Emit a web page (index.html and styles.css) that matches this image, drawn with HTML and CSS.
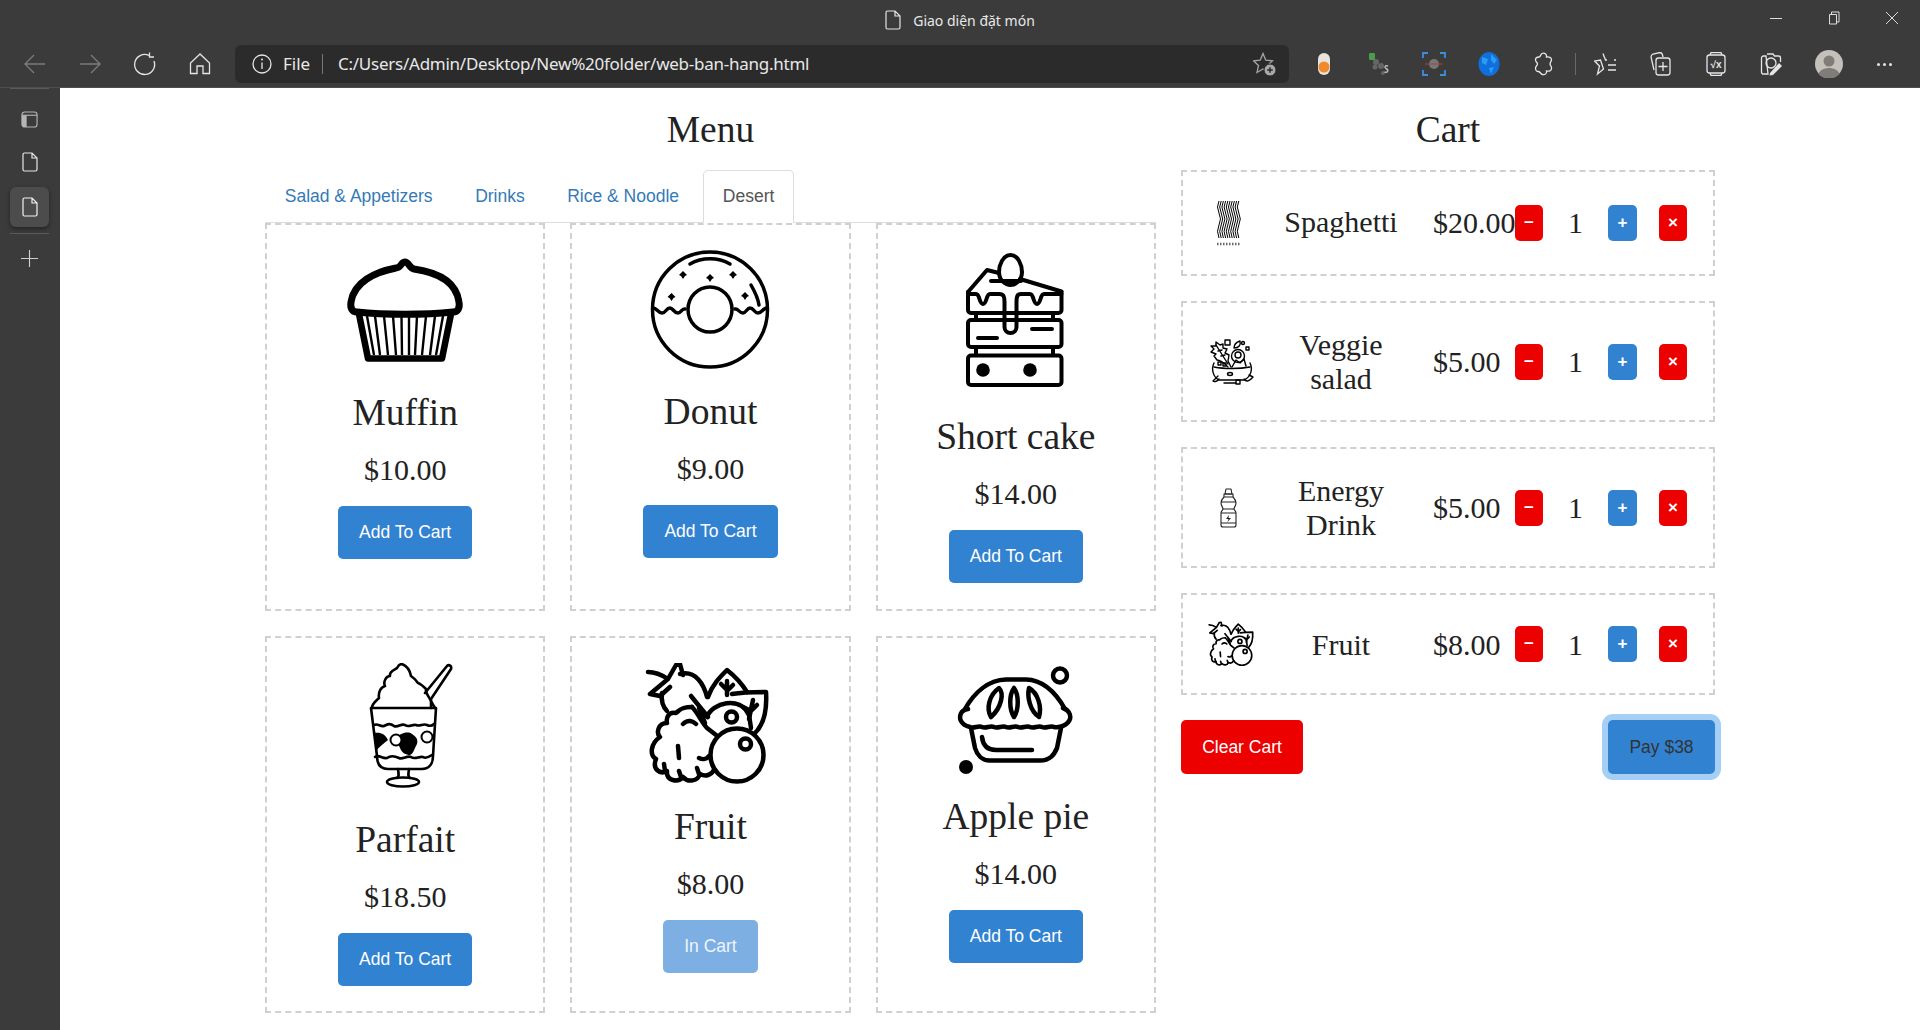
FILE: index.html
```html
<!DOCTYPE html>
<html lang="vi">
<head>
<meta charset="utf-8">
<title>Giao diện đặt món</title>
<link rel="stylesheet" href="styles.css">
</head>
<body>
<svg class="defs" aria-hidden="true">
  <symbol id="fruit" viewBox="-65 0 130 122">
    <g fill="none" stroke="#000" stroke-width="4.5" stroke-linecap="round" stroke-linejoin="round">
      <path d="M-62 9 C-55 9 -48 12 -42 16 L-60 31 L-50 33 L-40 24 M-42 16 L-34 2 L-30 1 L-27 12"/>
      <path d="M-30 11 C-14 7 -6 22 -3 34 M-48 30 C-49 38 -47 44 -43 48"/>
      <path d="M-19 33 L-2 54 M-11 45 L-5 60"/>
      <path d="M-2 34 C2 22 10 14 17 7 C26 14 32 21 37 29"/>
      <path d="M17 18 L17 32 M11 21 L17 27 M23 22 L17 28"/>
      <path d="M22 31 C34 29 46 29 56 29 C57 44 55 60 45 70"/>
      <path d="M43 37 L39 56 M33 44 L41 48 M47 42 L42 47"/>
      <path d="M-3 54 C2 40 30 32 39 52 L41 65"/>
      <circle cx="21.5" cy="54" r="5.5"/>
      <path d="M-18 44 C-30 44 -31 48 -34 50 C-42 48 -44 56 -43 60 C-52 60 -54 70 -50 74 C-59 80 -61 92 -54 96 C-58 106 -50 112 -43 108 C-44 118 -32 120 -27 114 C-22 120 -12 118 -10 111 C-4 114 1 112 4 107"/>
      <path d="M-18 44 C-12 50 -8 60 -3 65 L6 72 M-27 61 C-22 56 -17 58 -14 61 M-32 83 L-31 95 M-46 101 L-45 108 M-31 108 L-29 114 M-11 95 C-7 97 -3 96 -1 93 M-13 105 L-11 111"/>
      <ellipse cx="27" cy="92" rx="26.5" ry="26.5"/>
      <ellipse cx="35.5" cy="81" rx="5.5" ry="5.5"/>
    </g>
  </symbol>
</svg>

<header class="title-bar">
  <div class="title">
    <svg class="tab-doc" viewBox="0 0 16 20"><path d="M1 2.5 A1.5 1.5 0 0 1 2.5 1 H10 L15 6 V17.5 A1.5 1.5 0 0 1 13.5 19 H2.5 A1.5 1.5 0 0 1 1 17.5 Z M10 1 V6 H15" fill="none" stroke="#e6e6e6" stroke-width="1.2"/></svg>
    <span>Giao diện đặt món</span>
  </div>
  <div class="win-controls">
    <svg class="win-ico" viewBox="0 0 14 14"><path d="M1 7.5 H13" stroke="#ddd" fill="none"/></svg>
    <svg class="win-ico" viewBox="0 0 14 14"><path d="M2.5 3.5 H9.5 V13 H2.5 Z M4.5 3.5 V1 H12 V11 H9.5" stroke="#ddd" fill="none"/></svg>
    <svg class="win-ico" viewBox="0 0 14 14"><path d="M1 1 L13 13 M13 1 L1 13" stroke="#ddd" fill="none"/></svg>
  </div>
</header>

<nav class="tool-bar">
  <div class="slot"><svg class="ico" viewBox="0 0 24 24"><path d="M22 12 H2 M11 3 L2 12 L11 21" class="dim"/></svg></div>
  <div class="slot"><svg class="ico" viewBox="0 0 24 24"><path d="M2 12 H22 M13 3 L22 12 L13 21" class="dim"/></svg></div>
  <div class="slot"><svg class="ico" viewBox="0 0 24 24"><path d="M16 3.5 A10 10 0 1 0 21 9 M16.5 0.5 V5 H21" class="lite"/></svg></div>
  <div class="slot"><svg class="ico" viewBox="0 0 24 24"><path d="M12 2 L2.5 11 V21.5 H9 V14 H15 V21.5 H21.5 V11 Z" class="lite"/></svg></div>
  <div class="address">
    <svg class="info" viewBox="0 0 20 20"><circle cx="10" cy="10" r="9" class="lite"/><path d="M10 8.5 V15" class="lite"/><circle cx="10" cy="5.5" r="1" fill="#e6e6e6"/></svg>
    <span class="scheme">File</span>
    <span class="sep"></span>
    <span class="url">C:/Users/Admin/Desktop/New%20folder/web-ban-hang.html</span>
    <svg class="star" viewBox="0 0 24 24"><path d="M10 1.500 L12.800 8.200 L19.500 8.800 L14.500 13.500 L16 20.500 L10 17 L4 20.500 L5.500 13.500 L0.500 8.800 L7.200 8.200 Z" class="mid"/><circle cx="17" cy="18" r="6" fill="#a8a8a8" stroke="#2b2b2b"/><path d="M14.200 18 H19.800 M17 15.200 V20.800" stroke="#2b2b2b" stroke-width="1.500"/></svg>
  </div>
  <div class="slot"><svg class="ico" viewBox="0 0 24 24"><rect x="6" y="1" width="12" height="22" rx="6" fill="#e8e4dc"/><circle cx="12" cy="15" r="5.5" fill="#f08a2c"/></svg></div>
  <div class="slot"><svg class="ico" viewBox="0 0 24 24"><g fill="#666"><circle cx="5" cy="5" r="3"/><circle cx="9" cy="10" r="3"/><circle cx="14" cy="14" r="3"/><circle cx="8" cy="15" r="2.5"/><circle cx="16" cy="21" r="2"/></g><rect x="2" y="1" width="6" height="7" rx="1" fill="#4a9d4a"/><path d="M21 14 C18 13 17 15 19 16.500 C22 18 21 21 17.500 20" stroke="#bbb" stroke-width="1.400" fill="none"/></svg></div>
  <div class="slot"><svg class="ico" viewBox="0 0 24 24"><path d="M1 6 V1 H6 M18 1 H23 V6 M23 18 V23 H18 M6 23 H1 V18" fill="none" stroke="#3a8fe0" stroke-width="1.800"/><circle cx="12" cy="12" r="5" fill="#777"/><path d="M3 12 H21" stroke="#b5403c"/></svg></div>
  <div class="slot"><svg class="ico" viewBox="0 0 24 24"><ellipse cx="12" cy="12" rx="10.500" ry="12" fill="#0f6fdc"/><path d="M5 5 L11 7 L9 13 L5 11 Z M14 2 L20 8 L17 12 L14 8 Z M12 16 L17 15 L14 22 Z" fill="#2d9cf5"/></svg></div>
  <div class="slot"><svg class="ico" viewBox="0 0 24 24"><path d="M10 1.500 C13 0.500 15 2.500 14.500 5 C17 4.500 19.500 5.500 19.500 8 C19 10 18 10.500 18 12 C18 13.500 20 14 19.500 16.500 C19.500 19 17 19.500 14.500 19 C15 21.500 13 23 10.500 22.500 C8.500 22 8.500 20 6.500 19.500 C4 19.500 3.500 18 3.500 16 C3.500 14 5.500 13.500 5.500 12 C5.500 10.500 3.500 10 3.500 8 C3.500 6 5 5 7 5 C8.500 5 8.500 2.500 10 1.500 Z" class="lite"/></svg></div>
  <span class="tool-sep"></span>
  <div class="slot"><svg class="ico" viewBox="0 0 24 24"><path d="M9 1.500 L11.500 8 L13 8 M20 8 H22 M14 13 H22 M14 18 H22 M9.500 17 L3.500 22 L5.500 14 L0.500 9 L6.500 8 Z" class="lite"/></svg></div>
  <div class="slot"><svg class="ico" viewBox="0 0 24 24"><path d="M5 18 L2 5 C2 3 3 2.500 4 2 L11 0.500 C13 0.500 13.500 2 14 5" class="lite"/><rect x="7" y="6" width="14" height="17" rx="2.500" class="lite"/><path d="M14 10 V19 M9.500 14.500 H18.500" class="lite"/></svg></div>
  <div class="slot"><svg class="ico" viewBox="0 0 24 24"><path d="M6 3 L7 0.500 H17 L18 3 M6 21 L7 23.500 H17 L18 21" class="lite"/><rect x="3" y="3" width="18" height="18" rx="2.500" class="lite"/><text class="math" x="12" y="16">√x</text></svg></div>
  <div class="slot"><svg class="ico" viewBox="0 0 24 24"><path d="M8 2 H14 L15.500 4 H19.500 A2 2 0 0 1 21.500 6 V10 M9 22 H5 A2 2 0 0 1 2.500 20 V6 A2 2 0 0 1 4.500 4 H7 Z" class="lite"/><circle cx="12" cy="11" r="5" class="lite"/><path d="M11 21 L20 11 L23 14 L14 23 L10.500 23.500 Z" fill="#e6e6e6"/></svg></div>
  <div class="avatar"><svg class="avatar-ico" viewBox="0 0 28 28"><circle cx="14" cy="14" r="14" fill="#c4c1ba"/><circle cx="14" cy="11" r="5.500" fill="#807d79"/><path d="M3.500 24 C6 16 22 16 24.500 24 A14 14 0 0 1 3.500 24 Z" fill="#807d79"/></svg></div>
  <div class="dots"><i></i><i></i><i></i></div>
</nav>

<div class="body-row">
  <aside class="sidebar">
    <div class="side-line"></div>
    <div class="side-item s-layout"><svg class="side-ico" viewBox="0 0 18 18"><rect x="1" y="1" width="16" height="16" rx="3" fill="none" stroke="#b5b5b5" stroke-width="1.200"/><path d="M1 4.500 H17" stroke="#b5b5b5" stroke-width="1.200"/><path d="M1 4.500 H6 V17 H4 A3 3 0 0 1 1 14 Z" fill="#b5b5b5"/></svg></div>
    <div class="side-item s-doc"><svg class="side-ico tall" viewBox="0 0 16 20"><path d="M1 2.500 A1.500 1.500 0 0 1 2.500 1 H10 L15 6 V17.500 A1.500 1.500 0 0 1 13.500 19 H2.500 A1.500 1.500 0 0 1 1 17.500 Z M10 1 V6 H15" fill="none" stroke="#e8e8e8" stroke-width="1.200"/></svg></div>
    <div class="side-item active"><svg class="side-ico tall" viewBox="0 0 16 20"><path d="M1 2.500 A1.500 1.500 0 0 1 2.500 1 H10 L15 6 V17.500 A1.500 1.500 0 0 1 13.500 19 H2.500 A1.500 1.500 0 0 1 1 17.500 Z M10 1 V6 H15" fill="none" stroke="#f2f2f2" stroke-width="1.200"/></svg></div>
    <div class="side-line second"></div>
    <div class="side-item plus"><svg class="side-ico" viewBox="0 0 18 18"><path d="M9 0 V18 M0 9 H18" stroke="#cfcfcf" stroke-width="1.200"/></svg></div>
  </aside>

  <main class="page">
    <div class="layout">
      <section>
        <h2 class="heading">Menu</h2>
        <ul class="tabs">
          <li class="tab">Salad &amp; Appetizers</li>
          <li class="tab">Drinks</li>
          <li class="tab">Rice &amp; Noodle</li>
          <li class="tab current">Desert</li>
        </ul>
        <div class="cards">
          <article class="card">
            <svg class="food h141" viewBox="-65 0 130 141">
              <g fill="none" stroke="#000" stroke-linejoin="round">
                <path stroke-width="7" d="M-9 18 C-4 18 -4 12 0 12 C4 12 4 18 9 19 C30 22 51 30 54 52 C55 58 53 62 48 62 C20 65 -20 65 -48 62 C-53 62 -55 58 -54 52 C-51 32 -30 22 -9 18 Z"/>
                <path stroke-width="6.500" d="M-46 64 L-37 108.500 L37 108.500 L46 64"/>
                <path stroke-width="2.400" d="M-38 66 L-31 105 M-30 66 L-25 105 M-21 66 L-17 105 M-12 66 L-9 105 M-3.500 66 L-3 105 M4 66 L4 105 M12 66 L10 105 M21 66 L17 105 M30 66 L25 105 M38 66 L31 105"/>
              </g>
            </svg>
            <h3 class="name">Muffin</h3>
            <p class="price">$10.00</p>
            <button class="btn add">Add To Cart</button>
          </article>
          <article class="card">
            <svg class="food h140" viewBox="-65 0 130 140">
              <g fill="none" stroke="#000" stroke-width="3.500" stroke-linecap="round">
                <ellipse cx="0" cy="59.500" rx="57.500" ry="57.500"/>
                <ellipse cx="0" cy="59.500" rx="22" ry="22.500"/>
                <path d="M-57 58 C-53 58 -52 63 -48 63 C-44 63 -44 58 -40 58 C-37 58 -36 63 -32 63 C-29 63 -28 58 -25 59 M25 59 C28 58 29 63 33 63 C36 63 37 58 40 58 C44 58 44 63 48 63 C52 63 53 58 57 58"/>
                <path d="M-20 14 C-8 7 8 7 20 14 M41 35 C45 42 48 48 49 55"/>
              </g>
              <g fill="#000">
                <path d="M-27 21 L-23 25 L-25 26 L-27 29 L-29 26 L-31 25 Z"/>
                <path d="M0 24 L4 28 L2 29 L0 32 L-2 29 L-4 28 Z"/>
                <path d="M23 21 L27 25 L25 26 L23 29 L21 26 L19 25 Z"/>
                <path d="M-38.500 43 L-34.500 47 L-36.500 48 L-38.500 51 L-40.500 48 L-42.500 47 Z"/>
                <path d="M35 42 L39 46 L37 47 L35 50 L33 47 L31 46 Z"/>
              </g>
            </svg>
            <h3 class="name">Donut</h3>
            <p class="price">$9.00</p>
            <button class="btn add">Add To Cart</button>
          </article>
          <article class="card">
            <svg class="food h165" viewBox="-65 0 130 165">
              <g fill="none" stroke="#000" stroke-width="4" stroke-linecap="round" stroke-linejoin="round">
                <path d="M-5.500 5 C2 5 6 15 6 22 C6 31 -1 35 -5.500 35 C-10 35 -17 31 -17 22 C-17 15 -13 5 -5.500 5 Z"/>
                <path d="M-17 23 L-29 20 L-48 42 M4 29 L45.500 41.500 M-25 31 L5 31"/>
                <path d="M-48 42 V60 A3 3 0 0 0 -45 63 H42.500 A3 3 0 0 0 45.500 60 V42"/>
                <path d="M-48 44 H-40 C-36 44 -37 54 -33 54 C-29 54 -30 44 -26 44 H-17 C-12 44 -11.500 47 -11.500 52 V77 A6 6 0 0 0 0.500 77 V52 C0.500 47 1 44 5 44 H14 C18 44 17 54 21 54 C25 54 24 44 28 44 H45.500"/>
                <path d="M-40 63 V70 M37 63 V70"/>
                <path d="M-45 70 H-11 M1 70 H42.500 A3 3 0 0 1 45.500 73 V94 A3 3 0 0 1 42.500 97 H-45 A3 3 0 0 1 -48 94 V73 A3 3 0 0 1 -45 70 Z"/>
                <path d="M16 79 H36 M-38 88 H-19"/>
                <path d="M-40 97 V105 M37 97 V105"/>
                <path d="M-45 105.500 H42.500 A3 3 0 0 1 45.500 108.500 V132 A3 3 0 0 1 42.500 135 H-45 A3 3 0 0 1 -48 132 V108.500 A3 3 0 0 1 -45 105.500 Z"/>
              </g>
              <circle cx="-33" cy="120" r="6.800" fill="#000"/>
              <circle cx="14" cy="120" r="6.800" fill="#000"/>
            </svg>
            <h3 class="name">Short cake</h3>
            <p class="price">$14.00</p>
            <button class="btn add">Add To Cart</button>
          </article>
          <article class="card">
            <svg class="food h155" viewBox="-65 0 130 155">
              <g fill="none" stroke="#000" stroke-width="2.600" stroke-linejoin="round" stroke-linecap="round">
                <path d="M-33 45 C-33 40 -29 38 -26 35 C-27 29 -24 24 -20 23 C-22 19 -19 13 -15 13 C-16 8 -10 7 -8 5 C-7 3 -5 1 -3 1 C2 3 5 7 6 13 C9 15 11 17 13 20 C16 21 19 24 21 26 C20 30 25 35 27 40 L30 45"/>
                <path d="M-34 45 H31 L28 93 C28 101 24 106 17 106 H-17 C-25 106 -28 101 -28 93 Z"/>
                <path d="M20 30 L42 3 C44 1 47 3 46 6 L26 36 L26 45"/>
                <path d="M-31 62 C-27 60 -25 64 -21 63 C-17 61 -15 60 -11 63 C-7 65 -4 60 0 62 C4 65 7 61 11 62 C15 64 18 60 22 62 C24 63 27 63 29 61"/>
                <path d="M-30 94 C-26 91 -23 96 -18 95 C-14 92 -10 93 -6 95 C-2 97 2 92 6 94 C10 97 14 93 18 94 C21 96 24 94 27 92"/>
                <path d="M-7 106 C-6 112 -6 114 -8 115 M4 106 C3 112 3 114 5 115"/>
                <ellipse cx="-2" cy="119" rx="16" ry="4.500"/>
              </g>
              <path d="M-31 70 C-24 69 -20 71 -17 77 C-21 80 -26 84 -29 88 Z M-9 76 C-6 70 3 68 7 71 C12 74 14 78 11 83 C9 86 9 90 5 92 C1 92 -3 90 -5 85 Z" fill="#000"/>
              <circle cx="-9" cy="77" r="5.500" fill="#fff" stroke="#000" stroke-width="2"/>
              <circle cx="22" cy="74" r="5.500" fill="#fff" stroke="#000" stroke-width="2"/>
            </svg>
            <h3 class="name">Parfait</h3>
            <p class="price">$18.50</p>
            <button class="btn add">Add To Cart</button>
          </article>
          <article class="card">
            <svg class="food h142" viewBox="-65 0 130 142"><use href="#fruit" x="-65" y="0" width="130" height="122"/></svg>
            <h3 class="name">Fruit</h3>
            <p class="price">$8.00</p>
            <button class="btn in-cart">In Cart</button>
          </article>
          <article class="card">
            <svg class="food h132" viewBox="-65 0 130 132">
              <g fill="none" stroke="#000" stroke-width="4.500" stroke-linecap="round" stroke-linejoin="round">
                <path d="M-51 46 C-42 30 -28 17 -10 16.500 H10 C28 17 40 30 49 46"/>
                <path d="M-48 46 C-56 47 -57 54 -55 58 C-53 62 -50 63 -46 64 C-42 66 -38 62 -34 64 C-30 66 -26 62 -22 64 C-18 66 -14 62 -10 64 C-6 66 -2 62 2 64 C6 66 10 62 14 64 C18 66 22 62 26 64 C30 66 34 62 38 64 C44 65 52 62 54 56 C55 52 53 47 47 45"/>
                <path d="M-45 65 L-41 85 C-39 92 -34 97.500 -26 97.500 H24 C34 97.500 38 92 41 85 L45 65"/>
                <path d="M-34 74 C-33 83 -28 87 -20 87 H16"/>
                <path d="M-17 25 C-12 30 -14 44 -25 54 C-30 46 -27 32 -17 25 Z"/>
                <path d="M-2 25 C3 32 3 46 -2 54 C-7 46 -7 32 -2 25 Z"/>
                <path d="M13 25 C22 30 26 44 23 54 C14 48 11 34 13 25 Z"/>
                <circle cx="44" cy="12.500" r="7"/>
              </g>
              <circle cx="-50" cy="104" r="7" fill="#000"/>
            </svg>
            <h3 class="name">Apple pie</h3>
            <p class="price">$14.00</p>
            <button class="btn add">Add To Cart</button>
          </article>
        </div>
      </section>

      <section>
        <h2 class="heading">Cart</h2>
        <div class="cart-list">
          <div class="cart-row first-row">
            <div class="thumb t52">
              <svg class="mini spaghetti" viewBox="0 0 26 46">
                <g fill="none" stroke="#000" stroke-width="1">
                  <path d="M3 1 q-3 6 0 12 t0 12 t0 13"/>
                  <path d="M5.200 1 q-3 6 0 12 t0 12 t0 13"/>
                  <path d="M7.400 1 q-3 6 0 12 t0 12 t0 13"/>
                  <path d="M9.600 1 q-3 6 0 12 t0 12 t0 13"/>
                  <path d="M11.800 1 q-3 6 0 12 t0 12 t0 13"/>
                  <path d="M14 1 q-3 6 0 12 t0 12 t0 13"/>
                  <path d="M16.200 1 q-3 6 0 12 t0 12 t0 13"/>
                  <path d="M18.400 1 q-3 6 0 12 t0 12 t0 13"/>
                  <path d="M20.600 1 q-3 6 0 12 t0 12 t0 13"/>
                  <path d="M22.800 1 q-3 6 0 12 t0 12 t0 13"/>
                </g>
                <path d="M1 44 H25" stroke="#666" stroke-width="2.500" stroke-dasharray="1.500 1.500" fill="none"/>
              </svg>
            </div>
            <div class="item-name">Spaghetti</div>
            <div class="item-price">$20.00</div>
            <button class="mini-btn red">−</button>
            <div class="qty">1</div>
            <button class="mini-btn blue">+</button>
            <button class="mini-btn red remove">×</button>
          </div>
          <div class="cart-row">
            <div class="thumb">
              <svg class="mini salad" viewBox="0 0 44 46">
                <g fill="none" stroke="#000" stroke-width="1.400" stroke-linejoin="round" stroke-linecap="round">
                  <path d="M4 24 C1 30 3 38 9 41 H34 C41 38 43 30 40 24"/>
                  <path d="M4 28 C14 30 30 30 40 28"/>
                  <path d="M18 28 C14 24 10 21 7 21 L4 17 L6 15 L1 13 L4 10 L1 7 L6 7 L6 3 L10 6 L13 5 L13 9 L17 10 L15 14 L19 16 L18 22 L21 28"/>
                  <path d="M6 6 L18 25 M8 12 L12 11 M11 17 L15 16"/>
                  <circle cx="28" cy="17" r="6.500"/>
                  <circle cx="28" cy="16" r="3"/>
                  <path d="M22 28 L26 21 L30 24 L34 20 L36 27"/>
                  <rect x="15" y="1" width="5" height="5"/>
                  <path d="M24 9 C24 5 27 3 30 2 C31 6 29 9 24 9 Z"/>
                  <circle cx="33" cy="4" r="1.500"/>
                  <rect x="36" y="8" width="3" height="3"/>
                  <rect x="8" y="23" width="3" height="3"/>
                  <rect x="13" y="24" width="3" height="3"/>
                  <path d="M9 40 C7 43 4 43 3 42 L8 37 M34 40 C36 43 39 43 43 38 L39 36 M14 44 H26"/>
                  <rect x="26" y="41" width="4" height="4"/>
                  <ellipse cx="20" cy="35" rx="2.500" ry="1.500"/>
                </g>
              </svg>
            </div>
            <div class="item-name">Veggie salad</div>
            <div class="item-price">$5.00</div>
            <button class="mini-btn red">−</button>
            <div class="qty">1</div>
            <button class="mini-btn blue">+</button>
            <button class="mini-btn red remove">×</button>
          </div>
          <div class="cart-row">
            <div class="thumb">
              <svg class="mini bottle" viewBox="0 0 17 40">
                <g fill="none" stroke="#222" stroke-width="1.100" stroke-linejoin="round">
                  <path d="M6 1 H11 L12 6 H5 Z"/>
                  <path d="M4 6 H13 V9 H4 Z"/>
                  <path d="M4 9 C2 11 1 13 1 15 C1 18 3 19 3 21 C3 22 1 23 1 25 V37 A2 2 0 0 0 3 39 H14 A2 2 0 0 0 16 37 V25 C16 23 14 22 14 21 C14 19 16 18 16 15 C16 13 15 11 13 9"/>
                  <path d="M1 14 H16 M3 21 H14 M1 25 H16 M1 35 H16"/>
                </g>
                <path d="M9 27 L6 31 H8.500 L7.500 34 L11 30 H8.500 Z" fill="#222"/>
              </svg>
            </div>
            <div class="item-name">Energy Drink</div>
            <div class="item-price">$5.00</div>
            <button class="mini-btn red">−</button>
            <div class="qty">1</div>
            <button class="mini-btn blue">+</button>
            <button class="mini-btn red remove">×</button>
          </div>
          <div class="cart-row">
            <div class="thumb t48">
              <svg class="mini fruit-mini" viewBox="0 0 130 122"><use href="#fruit"/></svg>
            </div>
            <div class="item-name">Fruit</div>
            <div class="item-price">$8.00</div>
            <button class="mini-btn red">−</button>
            <div class="qty">1</div>
            <button class="mini-btn blue">+</button>
            <button class="mini-btn red remove">×</button>
          </div>
        </div>
        <div class="cart-actions">
          <button class="btn clear">Clear Cart</button>
          <button class="btn pay">Pay $38</button>
        </div>
      </section>
    </div>
  </main>
</div>
</body>
</html>
```
FILE: styles.css
```css
* { box-sizing: border-box; }
html, body { margin: 0; height: 100%; }
body {
  display: flex;
  flex-direction: column;
  height: 1030px;
  overflow: hidden;
  background: #3b3b3b;
  font-family: "Liberation Serif", "Times New Roman", serif;
  color: #222;
}
.defs { width: 0; height: 0; position: absolute; }

/* browser chrome */
.title-bar {
  height: 44px;
  flex: none;
  display: flex;
  align-items: center;
  justify-content: center;
  position: relative;
}
.title {
  display: flex;
  align-items: center;
  gap: 12px;
  margin-top: -4px;
  font: 14px "Noto Sans", sans-serif;
  color: #e8e8e8;
}
.tab-doc { width: 16px; height: 20px; }
.win-controls {
  position: absolute;
  right: 21px;
  top: 11px;
  display: flex;
  gap: 44px;
}
.win-ico { width: 14px; height: 14px; }

.tool-bar {
  height: 44px;
  flex: none;
  display: flex;
  align-items: flex-start;
  padding-left: 7.500px;
  padding-top: 1px;
  border-bottom: 1px solid #4d4d4d;
}
.slot {
  width: 55px;
  height: 38px;
  flex: none;
  display: flex;
  align-items: center;
  justify-content: center;
}
.ico { width: 24px; height: 24px; }
.dim, .lite, .mid { fill: none; stroke-width: 1.300; }
.dim { stroke: #7c7c7c; }
.lite { stroke: #e6e6e6; }
.mid { stroke: #a6a6a6; }
.math { font: 700 10px "Liberation Sans", sans-serif; fill: #e6e6e6; text-anchor: middle; }

.address {
  width: 1054px;
  height: 38px;
  margin: 0 7.500px;
  flex: none;
  background: #2b2b2b;
  border-radius: 6px;
  display: flex;
  align-items: center;
  padding: 0 12px 2px 17px;
  font: 17px "Noto Sans", sans-serif;
  color: #e8e8e8;
}
.info { width: 20px; height: 20px; margin: 2px 11px 0 0; }
.scheme { width: 39px; }
.sep { width: 1px; height: 20px; background: #777; margin: 2px 15px 0 0; }
.url { flex: 1; white-space: nowrap; letter-spacing: -0.250px; }
.star { width: 24px; height: 24px; margin-top: 2px; }
.tool-sep { width: 1px; height: 22px; margin: 8px 3px 0 3px; background: #6a6a6a; }
.avatar {
  width: 60px;
  height: 38px;
  flex: none;
  display: flex;
  align-items: center;
  justify-content: center;
}
.avatar-ico { width: 28px; height: 28px; }
.dots { flex: none; margin-left: 18px; height: 38px; display: flex; align-items: center; gap: 3px; }
.dots i { width: 3px; height: 3px; border-radius: 50%; background: #e6e6e6; }

.body-row { flex: 1; display: flex; min-height: 0; }
.sidebar { width: 60px; flex: none; padding: 0 11px 0 10px; }
.side-line { height: 1px; background: #5a5a5a; }
.side-line.second { margin-top: 6px; }
.side-item { height: 40px; display: flex; align-items: center; justify-content: center; }
.s-layout { margin-top: 10px; }
.s-doc { margin-top: 3px; }
.side-item.active {
  background: #4c4c4c;
  border-radius: 6px;
  box-shadow: 0 2px 4px rgba(0, 0, 0, .4);
  margin-top: 5px;
}
.side-item.plus { margin-top: 4px; }
.side-ico { width: 17px; height: 17px; }
.side-ico.tall { width: 16px; height: 20px; }

/* page */
.page { flex: 1; background: #fff; overflow: hidden; }
.layout {
  display: grid;
  grid-template-columns: 891px 534px;
  gap: 25px;
  justify-content: center;
}
.heading {
  font-size: 37.500px;
  font-weight: 400;
  line-height: 41.250px;
  text-align: center;
  margin: 21px 0 20px;
}
.tabs {
  list-style: none;
  margin: 0;
  padding: 0 0 0 1px;
  display: flex;
  height: 53px;
  border-bottom: 1.250px solid #ddd;
  font-family: "Liberation Sans", Arial, sans-serif;
  font-size: 17.500px;
  line-height: 25px;
}
.tab { padding: 14px 18.750px 0; margin-right: 5px; color: #337ab7; }
.tab.current {
  color: #555;
  background: #fff;
  border: 1.250px solid #ddd;
  border-bottom-color: transparent;
  border-radius: 5px 5px 0 0;
  height: 53px;
  padding: 13px 19px 0;
}
.cards {
  display: grid;
  grid-template-columns: repeat(3, 1fr);
  gap: 25.500px 25px;
}
.card {
  border: 2px dashed #d0d0d0;
  padding: 25px 0 25.500px;
  text-align: center;
}
.food { display: block; width: 130px; margin: 0 auto; }
.h132 { height: 132px; }
.h140 { height: 140px; }
.h141 { height: 141px; }
.h142 { height: 142px; }
.h155 { height: 155px; }
.h165 { height: 165px; }
.name {
  font-size: 37.500px;
  font-weight: 400;
  line-height: 41.250px;
  margin: 1px 0 19.500px;
}
.price {
  font-size: 30px;
  line-height: 33px;
  margin: 0 0 20px;
}
.btn {
  font-family: "Liberation Sans", Arial, sans-serif;
  font-size: 17.500px;
  height: 53px;
  padding: 0 21px;
  border: 0;
  border-radius: 5px;
  color: #fff;
  display: inline-block;
  vertical-align: top;
}
.add { background: #3182d1; }
.in-cart { background: #7dafe3; color: #eef4fb; }

/* cart */
.cart-list { display: flex; flex-direction: column; gap: 25.500px; }
.cart-row {
  display: flex;
  align-items: center;
  border: 2px dashed #d0d0d0;
  padding: 25px 0;
}
.thumb { width: 98px; flex: none; display: flex; align-items: center; justify-content: center; }
.t52 { height: 51.500px; }
.t48 { height: 48px; }
.mini { display: block; }
.spaghetti { width: 26px; height: 46px; margin-right: 6px; }
.salad { width: 44px; height: 46px; }
.bottle { width: 17px; height: 40px; margin-right: 7px; }
.fruit-mini { width: 48px; height: 46px; }
.item-name {
  width: 120px;
  flex: none;
  font-size: 30px;
  line-height: 33.250px;
  text-align: center;
}
.item-price {
  width: 82px;
  margin-left: 32px;
  flex: none;
  font-size: 30px;
  line-height: 33px;
}
.first-row .item-name,
.first-row .item-price,
.first-row .qty { margin-bottom: 2px; }
.mini-btn {
  width: 28px;
  height: 36px;
  flex: none;
  border: 0;
  border-radius: 5px;
  padding: 0;
  color: #fff;
  font: 700 17px "Liberation Sans", Arial, sans-serif;
}
.red { background: #ec0000; }
.blue { background: #3182d1; width: 29px; }
.remove { margin-left: 22px; }
.qty { width: 65px; flex: none; text-align: center; font-size: 30px; line-height: 33px; }
.cart-actions { display: flex; justify-content: space-between; margin-top: 25px; }
.clear { background: #ec0000; width: 122px; height: 54px; padding: 0; }
.pay {
  background: #3182d1;
  color: #333;
  width: 107px;
  height: 54px;
  padding: 0;
  box-shadow: 0 0 0 6px #a6cff5;
}
```
